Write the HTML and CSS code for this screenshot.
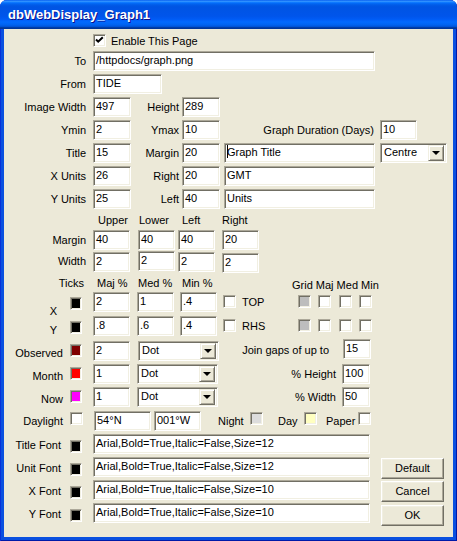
FILE: index.html
```html
<!DOCTYPE html>
<html lang="en">
<head>
    <meta charset="UTF-8">
    <title>dbWebDisplay_Graph1</title>
    <link rel="stylesheet" href="styles.css">
</head>
<body>
<div class="window">
    <div class="titlebar"><span class="title">dbWebDisplay_Graph1</span></div>
    <div class="client">

        <!-- enable -->
        <div class="row h20">
            <span class="check indent checked"><svg width="9" height="9" viewBox="0 0 9 9"><path d="M1 3.5 L3.2 5.7 L7.8 1.2" fill="none" stroke="#000" stroke-width="2"/></svg></span>
            <span class="text ml5">Enable This Page</span>
        </div>

        <!-- paths -->
        <div class="row">
            <span class="lab">To</span>
            <div class="field w282">/httpdocs/graph.png</div>
        </div>
        <div class="row">
            <span class="lab">From</span>
            <div class="field w69">TIDE</div>
        </div>

        <!-- size and scale -->
        <div class="row">
            <span class="lab">Image Width</span>
            <div class="field w38">497</div>
            <span class="lab2">Height</span>
            <div class="field w38">289</div>
        </div>
        <div class="row">
            <span class="lab">Ymin</span>
            <div class="field w38">2</div>
            <span class="lab2">Ymax</span>
            <div class="field w38">10</div>
            <span class="lab-dur">Graph Duration (Days)</span>
            <div class="field w37">10</div>
        </div>
        <div class="row">
            <span class="lab">Title</span>
            <div class="field w38">15</div>
            <span class="lab2">Margin</span>
            <div class="field w38">20</div>
            <div class="field w151 ml4"><span class="caret"></span>Graph Title</div>
            <div class="field combo w67 ml5"><span class="combo-text">Centre</span><span class="drop"></span></div>
        </div>
        <div class="row">
            <span class="lab">X Units</span>
            <div class="field w38">26</div>
            <span class="lab2">Right</span>
            <div class="field w38">20</div>
            <div class="field w151 ml4">GMT</div>
        </div>
        <div class="row">
            <span class="lab">Y Units</span>
            <div class="field w38">25</div>
            <span class="lab2">Left</span>
            <div class="field w38">40</div>
            <div class="field w151 ml4">Units</div>
        </div>

        <!-- margins -->
        <div class="row hdr">
            <span class="spacer"></span>
            <span class="col-upper">Upper</span>
            <span class="col-lower">Lower</span>
            <span class="col-left">Left</span>
            <span>Right</span>
        </div>
        <div class="row h21">
            <span class="lab">Margin</span>
            <div class="field w37">40</div>
            <div class="field w37 ml8">40</div>
            <div class="field w37 ml3">40</div>
            <div class="field w37 ml7">20</div>
        </div>
        <div class="row h22">
            <span class="lab">Width</span>
            <div class="field w37 mt1">2</div>
            <div class="field w37 ml8">2</div>
            <div class="field w37 ml3 mt1">2</div>
            <div class="field w37 ml7 mt2">2</div>
        </div>

        <!-- ticks -->
        <div class="row ticks-hdr">
            <span class="lab ticks">Ticks</span>
            <span class="col-maj">Maj %</span>
            <span class="col-med">Med %</span>
            <span class="col-min">Min %</span>
            <span class="grid-hdr">Grid Maj Med Min</span>
        </div>
        <div class="row h24">
            <span class="lab-s axis ax-x">X</span>
            <span class="swatch sw-tick" style="background:#000"></span>
            <div class="field w37 ml11">2</div>
            <div class="field w37 ml7">1</div>
            <div class="field w37 ml6">.4</div>
            <span class="check ml6 mt3"></span>
            <span class="text cb-text">TOP</span>
            <span class="check ml6 mt3 grey"></span>
            <span class="check ml7 mt3"></span>
            <span class="check ml8 mt3"></span>
            <span class="check ml7 mt3"></span>
        </div>
        <div class="row h25">
            <span class="lab-s axis ax-y">Y</span>
            <span class="swatch sw-tick" style="background:#000"></span>
            <div class="field w37 ml11">.8</div>
            <div class="field w37 ml7">.6</div>
            <div class="field w37 ml6">.4</div>
            <span class="check ml6 mt3"></span>
            <span class="text cb-text">RHS</span>
            <span class="check ml6 mt3 grey"></span>
            <span class="check ml7 mt3"></span>
            <span class="check ml8 mt3"></span>
            <span class="check ml7 mt3"></span>
        </div>

        <!-- series -->
        <div class="row">
            <span class="lab-s low">Observed</span>
            <span class="swatch mt3" style="background:#800000"></span>
            <div class="field w37 ml11">2</div>
            <div class="field combo w81 ml8"><span class="combo-text">Dot</span><span class="drop"></span></div>
            <span class="lab-r gap">Join gaps of up to</span>
            <div class="field w28 up2">15</div>
        </div>
        <div class="row">
            <span class="lab-s low">Month</span>
            <span class="swatch mt3" style="background:#ff0000"></span>
            <div class="field w37 ml11">1</div>
            <div class="field combo w81 ml7"><span class="combo-text">Dot</span><span class="drop"></span></div>
            <span class="lab-r tight">% Height</span>
            <div class="field w28">100</div>
        </div>
        <div class="row h24">
            <span class="lab-s low">Now</span>
            <span class="swatch mt3" style="background:#ff00ff"></span>
            <div class="field w37 ml11">1</div>
            <div class="field combo w81 ml7"><span class="combo-text">Dot</span><span class="drop"></span></div>
            <span class="lab-r">% Width</span>
            <div class="field w28">50</div>
        </div>

        <!-- daylight -->
        <div class="row">
            <span class="lab-s">Daylight</span>
            <span class="check day-check"></span>
            <div class="field w57 ml11">54°N</div>
            <div class="field w47 ml3">001°W</div>
            <span class="text ml17 w32">Night</span>
            <span class="check mt1 night"></span>
            <span class="text ml15 w26">Day</span>
            <span class="check mt1 day"></span>
            <span class="text ml9 w32">Paper</span>
            <span class="check mt1"></span>
        </div>

        <!-- fonts -->
        <div class="row">
            <span class="lab-s font">Title Font</span>
            <span class="swatch mt6" style="background:#000"></span>
            <div class="field w277 ml11">Arial,Bold=True,Italic=False,Size=12</div>
        </div>
        <div class="row">
            <span class="lab-s font">Unit Font</span>
            <span class="swatch mt6" style="background:#000"></span>
            <div class="field w277 ml11">Arial,Bold=True,Italic=False,Size=12</div>
            <span class="button ml11">Default</span>
        </div>
        <div class="row">
            <span class="lab-s font">X Font</span>
            <span class="swatch mt6" style="background:#000"></span>
            <div class="field w277 ml11">Arial,Bold=True,Italic=False,Size=10</div>
            <span class="button ml11">Cancel</span>
        </div>
        <div class="row">
            <span class="lab-s font">Y Font</span>
            <span class="swatch mt6" style="background:#000"></span>
            <div class="field w277 ml11">Arial,Bold=True,Italic=False,Size=10</div>
            <span class="button ml11 mt2">OK</span>
        </div>

    </div>
</div>
</body>
</html>
```

FILE: styles.css
```css
body {
    margin: 0;
    background: #ffffff;
    font-family: "Liberation Sans", Arial, sans-serif;
    font-size: 11px;
    color: #000;
}

/* window frame */
.window {
    width: 457px;
    height: 541px;
    box-sizing: border-box;
    display: flex;
    flex-direction: column;
    background: #0a50e0;
    border-radius: 7px 7px 0 0;
    box-shadow: inset 1px 0 #0831d9, inset -1px 0 #0019a8, inset 0 -1px #0019a8;
    overflow: hidden;
}
.titlebar {
    height: 29px;
    flex: none;
    display: flex;
    align-items: center;
    padding-left: 8px;
    background: linear-gradient(180deg, #0058ee 0%, #3593ff 4%, #288eff 6%, #127dff 8%, #036ffc 10%, #0262ee 14%, #0057e5 20%, #0054e3 24%, #0055eb 56%, #005bf5 66%, #026afe 76%, #0062ef 86%, #0052d6 92%, #0040ab 94%, #003092 100%);
}
.title {
    font-family: "Liberation Sans", Arial, sans-serif;
    font-weight: bold;
    font-size: 13px;
    color: #fff;
    text-shadow: 1px 1px #0f1089;
}
.client {
    flex: 1;
    margin: 0 4px 4px 4px;
    padding-top: 2px;
    background: #ece9d8;
}

/* rows */
.row {
    display: flex;
    align-items: flex-start;
    height: 23px;
    white-space: nowrap;
}
.h20 { height: 20px; }
.h21 { height: 21px; }
.h22 { height: 22px; }
.h24 { height: 24px; }
.h25 { height: 25px; }

.text { line-height: 20px; }

/* labels */
.lab, .lab-s, .lab2, .lab-dur, .lab-r {
    box-sizing: border-box;
    text-align: right;
    line-height: 20px;
    flex: none;
}
.lab { width: 89px; padding-right: 7px; }
.lab-s { width: 66px; padding-right: 7px; }
.lab-s.low { padding-top: 2px; }
.lab-s.font { padding-right: 9px; padding-top: 1px; }
.lab2 { width: 51px; padding-right: 3px; }
.lab-dur { width: 160px; padding-right: 6px; }
.lab-r { width: 124px; padding-right: 6px; }
.lab-r.gap { padding-right: 14px; margin-top: -1px; }

.lab-s.axis { line-height: 13px; padding-right: 13px; }
.ax-x { margin-top: 13px; }
.ax-y { margin-top: 8px; }

/* column headings */
.hdr { height: 18px; line-height: 14px; padding-top: 1px; box-sizing: border-box; }
.spacer { width: 89px; flex: none; }
.col-upper { width: 40px; padding-left: 5px; }
.col-lower { width: 39px; padding-left: 1px; }
.col-left { width: 40px; padding-left: 4px; }

.ticks-hdr { height: 19px; line-height: 14px; padding-top: 3px; box-sizing: border-box; }
.lab.ticks { line-height: 14px; padding-right: 9px; }
.col-maj { width: 40px; padding-left: 4px; }
.col-med { width: 42px; padding-left: 1px; }
.col-min { width: 110px; padding-left: 2px; }
.grid-hdr { margin-top: 2px; }

/* sunken edit box */
.field {
    box-sizing: border-box;
    height: 20px;
    flex: none;
    padding: 0 2px;
    line-height: 16px;
    background: #fff;
    border: 1px solid;
    border-color: #aca899 #ffffff #ffffff #aca899;
    box-shadow: inset 1px 1px 0 #716f64, inset -1px -1px 0 #f1efe2;
    overflow: hidden;
}
.caret {
    display: inline-block;
    width: 1px;
    height: 13px;
    margin-right: -1px;
    vertical-align: -2px;
    background: #000;
}

.combo {
    display: flex;
    padding: 0 2px 0 3px;
}
.combo-text { flex: 1; }
.drop {
    box-sizing: border-box;
    width: 16px;
    height: 16px;
    margin-top: 1px;
    background: #ece9d8;
    border: 1px solid;
    border-color: #f1efe2 #716f64 #716f64 #f1efe2;
    box-shadow: inset 1px 1px 0 #fff, inset -1px -1px 0 #aca899;
    position: relative;
}
.drop::after {
    content: "";
    position: absolute;
    left: 3px;
    top: 5px;
    border-left: 4px solid transparent;
    border-right: 4px solid transparent;
    border-top: 4px solid #000;
}

/* check boxes and colour swatches */
.check, .swatch {
    box-sizing: border-box;
    flex: none;
    width: 13px;
    height: 13px;
    background: #fff;
    border: 1px solid;
    border-color: #aca899 #ffffff #ffffff #aca899;
    box-shadow: inset 1px 1px 0 #716f64, inset -1px -1px 0 #f1efe2;
}
.check.checked { display: flex; align-items: center; justify-content: center; }
.check.grey { background: #bdbdbd; }
.check.night { background: #dcdcdc; }
.check.day { background: #ffffc0; }
.indent { margin-left: 89px; margin-top: 3px; }
.day-check { margin-top: 1px; }

.swatch { width: 12px; }
.sw-tick { margin-top: 5px; }

.cb-text { margin-left: 6px; width: 50px; }

/* push buttons */
.button {
    box-sizing: border-box;
    flex: none;
    width: 63px;
    height: 21px;
    margin-top: 1px;
    line-height: 19px;
    text-align: center;
    background: #ece9d8;
    border: 1px solid;
    border-color: #ffffff #716f64 #716f64 #ffffff;
    box-shadow: inset -1px -1px 0 #aca899, inset 1px 1px 0 #f1efe2;
}

/* widths */
.w26 { width: 26px; }
.w28 { width: 28px; }
.w32 { width: 32px; }
.w37 { width: 37px; }
.w38 { width: 38px; }
.w47 { width: 47px; }
.w57 { width: 57px; }
.w67 { width: 67px; }
.w69 { width: 69px; }
.w81 { width: 81px; }
.w151 { width: 151px; }
.w277 { width: 277px; }
.w282 { width: 282px; }

/* spacing */
.ml3 { margin-left: 3px; }
.ml4 { margin-left: 4px; }
.ml5 { margin-left: 5px; }
.ml6 { margin-left: 6px; }
.ml7 { margin-left: 7px; }
.ml8 { margin-left: 8px; }
.ml9 { margin-left: 9px; }
.ml11 { margin-left: 11px; }
.ml15 { margin-left: 15px; }
.ml17 { margin-left: 17px; }
.mt1 { margin-top: 1px; }
.mt2 { margin-top: 2px; }
.mt3 { margin-top: 3px; }
.mt6 { margin-top: 6px; }
.up2 { margin-top: -2px; }
```
